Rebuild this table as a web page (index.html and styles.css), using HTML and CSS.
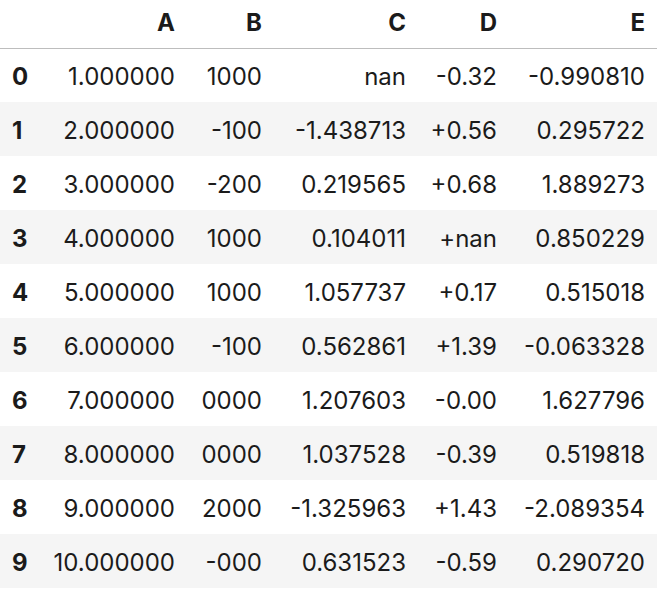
FILE: index.html
```html
<!DOCTYPE html>
<html>
<head>
<meta charset="utf-8">
<link rel="stylesheet" href="styles.css">
</head>
<body>
<table class="df">
  <colgroup>
    <col class="c-idx"><col class="c-a"><col class="c-b"><col class="c-c"><col class="c-d"><col class="c-e">
  </colgroup>
  <thead>
    <tr><th></th><th>A</th><th>B</th><th>C</th><th>D</th><th>E</th></tr>
  </thead>
  <tbody>
    <tr><th>0</th><td>1.000000</td><td>1000</td><td>nan</td><td>-0.32</td><td>-0.990810</td></tr>
    <tr><th>1</th><td>2.000000</td><td>-100</td><td>-1.438713</td><td>+0.56</td><td>0.295722</td></tr>
    <tr><th>2</th><td>3.000000</td><td>-200</td><td>0.219565</td><td>+0.68</td><td>1.889273</td></tr>
    <tr><th>3</th><td>4.000000</td><td>1000</td><td>0.104011</td><td>+nan</td><td>0.850229</td></tr>
    <tr><th>4</th><td>5.000000</td><td>1000</td><td>1.057737</td><td>+0.17</td><td>0.515018</td></tr>
    <tr><th>5</th><td>6.000000</td><td>-100</td><td>0.562861</td><td>+1.39</td><td>-0.063328</td></tr>
    <tr><th>6</th><td>7.000000</td><td>0000</td><td>1.207603</td><td>-0.00</td><td>1.627796</td></tr>
    <tr><th>7</th><td>8.000000</td><td>0000</td><td>1.037528</td><td>-0.39</td><td>0.519818</td></tr>
    <tr><th>8</th><td>9.000000</td><td>2000</td><td>-1.325963</td><td>+1.43</td><td>-2.089354</td></tr>
    <tr><th>9</th><td>10.000000</td><td>-000</td><td>0.631523</td><td>-0.59</td><td>0.290720</td></tr>
  </tbody>
</table>
</body>
</html>
```
FILE: styles.css
```css
html, body {
  margin: 0;
  padding: 0;
  background: #ffffff;
}
.df {
  border-collapse: collapse;
  table-layout: fixed;
  width: 657px;
  font-family: Inter, "Liberation Sans", sans-serif;
  font-size: 24px;
  color: #1b1b1b;
}
.c-idx { width: 40px; }
.c-a { width: 147px; }
.c-b { width: 87px; }
.c-c { width: 144px; }
.c-d { width: 91px; }
.c-e { width: 148px; }
.df th, .df td {
  padding: 0 12px;
  text-align: right;
  white-space: nowrap;
  line-height: 1;
  vertical-align: middle;
}
.df thead tr {
  height: 48px;
}
.df thead th {
  font-weight: 700;
  border-bottom: 1px solid #bdbdbd;
  padding-bottom: 2px;
}
.df tbody tr {
  height: 54px;
}
.df tbody th, .df tbody td {
  padding-top: 4px;
}
.df tbody th {
  font-weight: 700;
  text-align: left;
}
.df tbody tr:nth-child(even) {
  background: #f5f5f5;
}
```
